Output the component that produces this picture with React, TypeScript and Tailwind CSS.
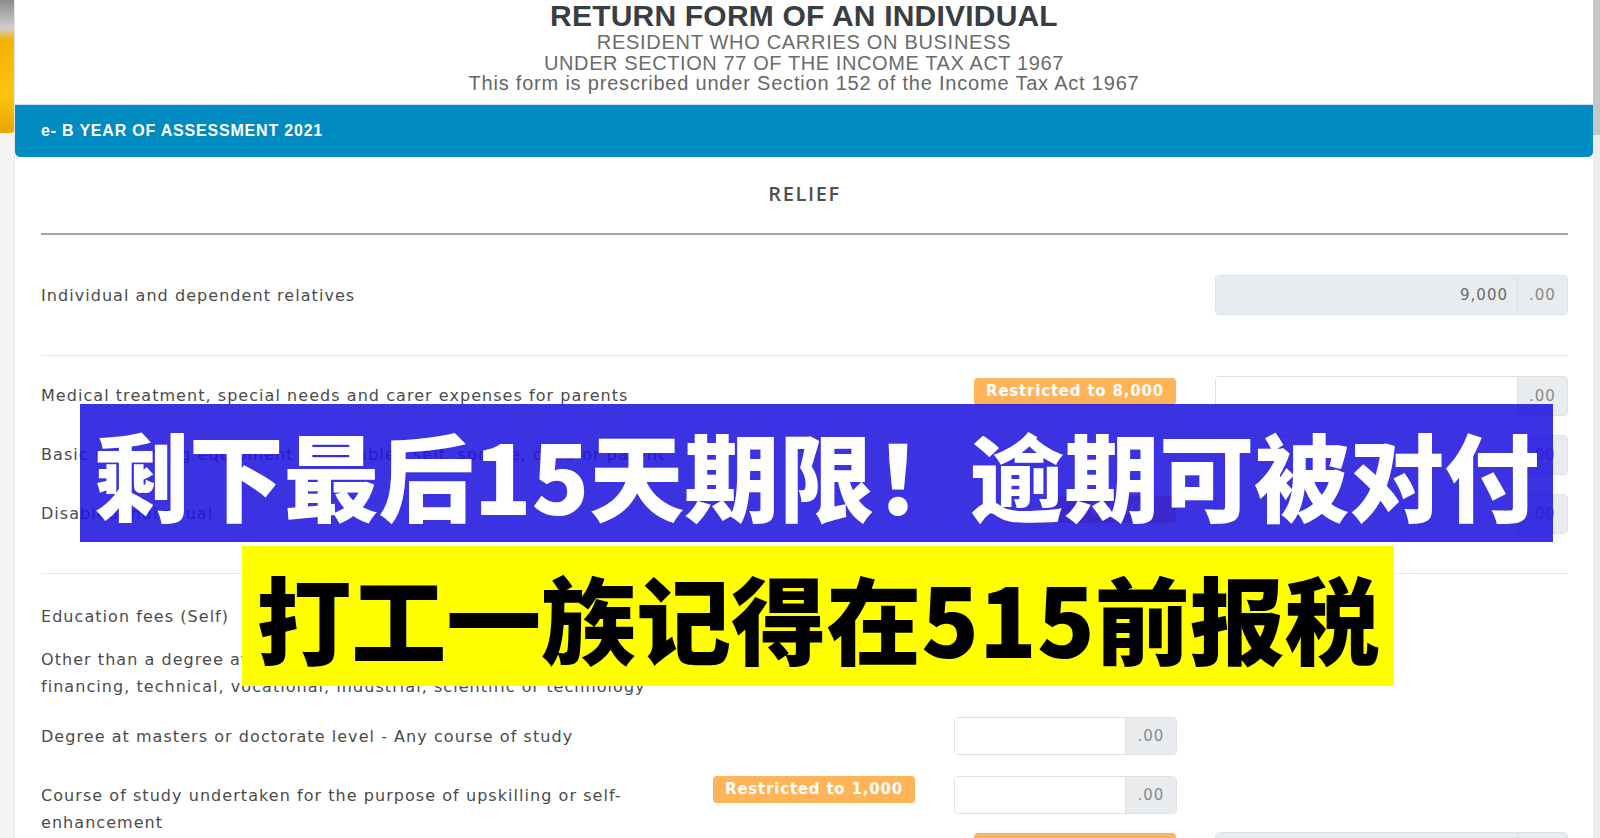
import React from "react";

const label =
  "font-['DejaVu_Sans',sans-serif] text-[16px] tracking-[1.05px] text-[#4b4b4b] leading-[27px]";

function Badge({ text, narrow }: { text: string; narrow?: boolean }) {
  return (
    <div
      className={
        narrow
          ? "h-[27px] w-[120px] rounded-[4px] bg-[#ffb45a] flex items-center justify-center text-white font-bold font-['DejaVu_Sans',sans-serif] text-[15px] tracking-[0.8px]"
          : "h-[27px] w-[202px] rounded-[4px] bg-[#ffb45a] flex items-center justify-center text-white font-bold font-['DejaVu_Sans',sans-serif] text-[15px] tracking-[0.8px]"
      }
    >
      {text}
    </div>
  );
}

function WideInput({ value, disabled }: { value?: string; disabled?: boolean }) {
  return (
    <div className="flex shrink-0 h-[40px] w-[353px] rounded-[4px] border border-[#dde1e6] overflow-hidden font-['DejaVu_Sans',sans-serif] text-[15px] tracking-[1px]">
      <div
        className={
          disabled
            ? "flex-1 bg-[#e9ecef] flex items-center justify-end pr-[9px] text-[#6a6a6a]"
            : "flex-1 bg-white flex items-center justify-end pr-[9px] text-[#6a6a6a]"
        }
      >
        {value}
      </div>
      <div className="w-[50px] bg-[#e9ecef] border-l border-[#dde1e6] flex items-center justify-center text-[#8a8a8a]">
        .00
      </div>
    </div>
  );
}

function NarrowInput() {
  return (
    <div className="flex shrink-0 h-[38px] w-[223px] rounded-[4px] border border-[#dde1e6] overflow-hidden font-['DejaVu_Sans',sans-serif] text-[15px] tracking-[1px]">
      <div className="flex-1 bg-white" />
      <div className="w-[51px] bg-[#e9ecef] border-l border-[#dde1e6] flex items-center justify-center text-[#8a8a8a]">
        .00
      </div>
    </div>
  );
}

function WideRow({
  text,
  badge,
  narrowBadge,
  value,
  disabled,
  h,
}: {
  text: string;
  badge?: string;
  narrowBadge?: boolean;
  value?: string;
  disabled?: boolean;
  h: string;
}) {
  return (
    <div className={`flex items-start ${h}`}>
      <div className={`flex-1 pt-[6px] ${label}`}>{text}</div>
      <div className="w-[202px] shrink-0 flex justify-end mt-[2px]">
        {badge ? <Badge text={badge} narrow={narrowBadge} /> : null}
      </div>
      <div className="w-[39px] shrink-0" />
      <WideInput value={value} disabled={disabled} />
    </div>
  );
}

export default function App() {
  return (
    <div className="w-[1600px] h-[838px] relative overflow-hidden bg-[#f2f2f2] flex">
      {/* left strip */}
      <div className="w-[14px] shrink-0 flex flex-col">
        <div className="h-[133px] shrink-0 bg-[linear-gradient(180deg,#8c8c8c_0px,#cfcfcf_28px,#f3b300_40px,#fbc410_95px,#e9a500_133px)] rounded-br-[3px]" />
        <div className="flex-1 bg-[#f3f3f3]" />
      </div>

      {/* card */}
      <div className="w-[1579px] shrink-0 bg-white border-l border-[#e9e9e9] overflow-hidden">
        {/* header */}
        <div className="h-[105px] flex flex-col items-center font-['Liberation_Sans',Arial,sans-serif] border-b border-[#cfe6ef]">
          <div className="mt-[1px] text-[30px] leading-[30px] font-bold tracking-[0.2px] text-[#3a3d42]">
            RETURN FORM OF AN INDIVIDUAL
          </div>
          <div className="mt-[1px] text-[20px] leading-[20.5px] tracking-[0.7px] text-[#6b6b6b]">
            RESIDENT WHO CARRIES ON BUSINESS
          </div>
          <div className="text-[20px] leading-[20.5px] tracking-[0.6px] text-[#6b6b6b]">
            UNDER SECTION 77 OF THE INCOME TAX ACT 1967
          </div>
          <div className="text-[20px] leading-[20.5px] tracking-[0.8px] text-[#666]">
            This form is prescribed under Section 152 of the Income Tax Act 1967
          </div>
        </div>

        {/* blue bar */}
        <div className="h-[52px] bg-[#008bc1] rounded-b-[5px] flex items-center pl-[26px] text-white font-bold font-['Liberation_Sans',Arial,sans-serif] text-[16px] tracking-[0.8px]">
          e- B YEAR OF ASSESSMENT 2021
        </div>

        {/* body */}
        <div className="pl-[26px] pr-[25px]">
          <div className="h-[76px] flex justify-center pt-[25px]">
            <div className="font-['Open_Sans',sans-serif] font-semibold text-[20px] leading-[24px] tracking-[1.6px] text-[#505050]">
              RELIEF
            </div>
          </div>
          <div className="h-[2px] bg-[#a6a6a6]" />

          <div className="h-[120px] flex items-center">
            <div className={`flex-1 ${label}`}>Individual and dependent relatives</div>
            <WideInput value="9,000" disabled />
          </div>
          <div className="h-[1px] bg-[#e8e8e8]" />

          <div className="pt-[20px] pb-[20px]">
            <WideRow
              h="h-[59px]"
              text="Medical treatment, special needs and carer expenses for parents"
              badge="Restricted to 8,000"
            />
            <WideRow
              h="h-[59px]"
              text="Basic supporting equipment for disabled self, spouse, child or parent"
            />
            <WideRow h="h-[59px]" text="Disabled individual" badge="6,000" narrowBadge />
          </div>
          <div className="h-[1px] bg-[#e8e8e8]" />

          <div className="pt-[29px]">
            <div className={label}>Education fees (Self)</div>
            <div className={`mt-[16px] ${label}`}>
              Other than a degree at masters or doctorate level - Course of study in law, accounting, islamic
              <br />
              financing, technical, vocational, industrial, scientific or technology
            </div>

            <div className="mt-[17px] h-[59px] flex items-start">
              <div className={`flex-1 pt-[6px] ${label}`}>
                Degree at masters or doctorate level - Any course of study
              </div>
              <div className="w-[202px] shrink-0" />
              <div className="w-[39px] shrink-0" />
              <NarrowInput />
              <div className="w-[391px] shrink-0" />
            </div>

            <div className="h-[56px] flex items-start">
              <div className={`flex-1 pt-[6px] ${label}`}>
                Course of study undertaken for the purpose of upskilling or self-
                <br />
                enhancement
              </div>
              <div className="w-[202px] shrink-0">
                <Badge text="Restricted to 1,000" />
              </div>
              <div className="w-[39px] shrink-0" />
              <NarrowInput />
              <div className="w-[391px] shrink-0" />
            </div>

            <div className="h-[59px] flex items-start">
              <div className={`flex-1 pt-[6px] ${label}`}>
                Lifestyle - Expenses for the use / benefit of self, spouse or child
              </div>
              <div className="w-[202px] shrink-0 mt-[1px]">
                <Badge text="Restricted to 2,500" />
              </div>
              <div className="w-[39px] shrink-0" />
              <WideInput value="" disabled />
            </div>
          </div>
        </div>
      </div>

      {/* right strip */}
      <div className="w-[7px] shrink-0 flex flex-col">
        <div className="h-[135px] shrink-0 bg-[#c6c6c6]" />
        <div className="flex-1 bg-[#ededed]" />
      </div>

      {/* overlays */}
      <div className="absolute left-[80px] top-[404px] w-[1473px] h-[138px] bg-[rgba(30,20,222,0.87)] flex items-center justify-center">
        <span className="font-['Noto_Sans_CJK_SC','Noto_Sans',sans-serif] font-black text-[95px] leading-none text-white">
          剩下最后15天期限！逾期可被对付
        </span>
      </div>
      <div className="absolute left-[242px] top-[546px] w-[1152px] h-[140px] bg-[#ffff00] flex items-center justify-center">
        <span className="font-['Noto_Sans_CJK_SC','Noto_Sans',sans-serif] font-black text-[95px] leading-none text-black">
          打工一族记得在515前报税
        </span>
      </div>
    </div>
  );
}
